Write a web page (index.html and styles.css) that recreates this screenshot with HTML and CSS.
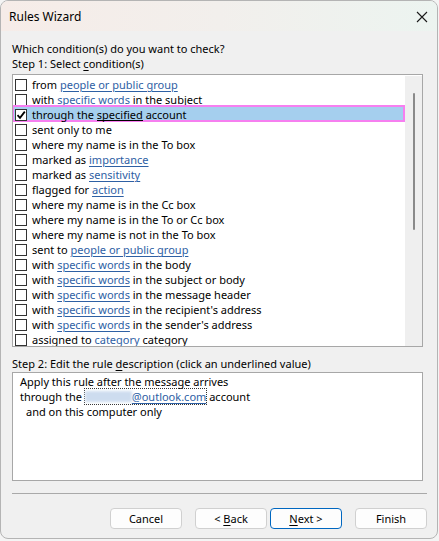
FILE: index.html
```html
<!DOCTYPE html>
<html>
<head>
<meta charset="utf-8">
<link rel="stylesheet" href="styles.css">
</head>
<body>
<div class="window">
  <div class="titlebar">
    <span class="title">Rules Wizard</span>
    <span class="close"><svg width="12" height="12" viewBox="0 0 12 12"><path d="M1 1 L11 11 M11 1 L1 11" stroke="#1a1a1a" stroke-width="1.1" fill="none"/></svg></span>
  </div>
  <div class="content">
    <div class="label">Which condition(s) do you want to check?</div>
    <div class="label">Step 1: Select <u>c</u>ondition(s)</div>
    <div class="listbox">
      <ul class="items">
        <li class="row"><span class="cb"></span><span>from <a>people or public group</a></span></li>
        <li class="row"><span class="cb"></span><span>with <a>specific words</a> in the subject</span></li>
        <li class="row selected"><span class="cb checked"><svg width="10" height="10" viewBox="0 0 10 10"><path d="M1.5 5.2 L4 7.8 L8.8 1.6" stroke="#000" stroke-width="1.8" fill="none"/></svg></span><span class="seltext">through the <span class="sel">specified</span> account</span></li>
        <li class="row"><span class="cb"></span><span>sent only to me</span></li>
        <li class="row"><span class="cb"></span><span>where my name is in the To box</span></li>
        <li class="row"><span class="cb"></span><span>marked as <a>importance</a></span></li>
        <li class="row"><span class="cb"></span><span>marked as <a>sensitivity</a></span></li>
        <li class="row"><span class="cb"></span><span>flagged for <a>action</a></span></li>
        <li class="row"><span class="cb"></span><span>where my name is in the Cc box</span></li>
        <li class="row"><span class="cb"></span><span>where my name is in the To or Cc box</span></li>
        <li class="row"><span class="cb"></span><span>where my name is not in the To box</span></li>
        <li class="row"><span class="cb"></span><span>sent to <a>people or public group</a></span></li>
        <li class="row"><span class="cb"></span><span>with <a>specific words</a> in the body</span></li>
        <li class="row"><span class="cb"></span><span>with <a>specific words</a> in the subject or body</span></li>
        <li class="row"><span class="cb"></span><span>with <a>specific words</a> in the message header</span></li>
        <li class="row"><span class="cb"></span><span>with <a>specific words</a> in the recipient's address</span></li>
        <li class="row"><span class="cb"></span><span>with <a>specific words</a> in the sender's address</span></li>
        <li class="row"><span class="cb"></span><span>assigned to <a>category</a> category</span></li>
      </ul>
      <div class="scrollbar"><div class="thumb"></div></div>
    </div>
    <div class="label step2">Step 2: Edit the rule <u>d</u>escription (click an underlined value)</div>
    <div class="desc">
      <div class="dline">Apply this rule after the message arrives</div>
      <div class="dline">through the <span class="focus"><span class="blur"></span><a>@outlook.com</a></span> account</div>
      <div class="dline indent">and on this computer only</div>
    </div>
    <div class="sep"></div>
    <div class="buttons">
      <button class="btn cancel">Cancel</button>
      <button class="btn back">&lt; <u>B</u>ack</button>
      <button class="btn next default"><u>N</u>ext &gt;</button>
      <button class="btn">Finish</button>
    </div>
  </div>
</div>
</body>
</html>
```
FILE: styles.css
```css
* { box-sizing: border-box; }
html, body { margin: 0; padding: 0; }
body {
  background: #f4f4f4;
  font-family: "Noto Sans", "DejaVu Sans", sans-serif;
  font-size: 11px;
  color: #000;
}
.window {
  width: 438px;
  height: 539px;
  border: 1px solid #b4b4b4;
  border-radius: 8px;
  background: #f0f0f0;
  overflow: hidden;
  display: flex;
  flex-direction: column;
}
.titlebar {
  height: 30px;
  flex: none;
  display: flex;
  align-items: center;
  justify-content: space-between;
  padding: 0 9px 0 8px;
  background: linear-gradient(90deg, #f6ece8 0%, #f2efec 50%, #ecf4f0 100%);
}
.title { font-size: 12px; }
.close { display: flex; width: 12px; height: 12px; margin-top: 1px; }
.content {
  padding: 10px 10px 0 11px;
  display: flex;
  flex-direction: column;
}
.label { line-height: 15px; height: 15px; white-space: nowrap; }
.label u { text-decoration-thickness: 1px; text-underline-offset: 2px; }
.listbox {
  margin-top: 3px;
  width: 411px;
  height: 273px;
  border: 1px solid #a7a7a7;
  background: #fff;
  display: flex;
  overflow: hidden;
}
.items {
  list-style: none;
  margin: 0;
  padding: 2px 0 0 0;
  flex: 1;
}
.row {
  height: 15px;
  line-height: 15px;
  display: flex;
  align-items: center;
  padding-left: 2px;
  position: relative;
  white-space: nowrap;
}
.row.selected { background: #a5cfee; }
.row.selected::before {
  content: "";
  position: absolute;
  left: -1px; right: 0; top: -2px; bottom: 0;
  border: 2px solid #f67ff0;
  pointer-events: none;
}
.seltext { position: relative; z-index: 1; }
.sel {
  display: inline-block;
  line-height: 11px;
  border-bottom: 1px solid #000;
}
.cb {
  width: 12px;
  height: 12px;
  border: 1px solid #333;
  background: #fff;
  margin-right: 5px;
  flex: none;
  display: flex;
  align-items: center;
  justify-content: center;
  position: relative;
}
a {
  color: #2e60a4;
  text-decoration: underline;
  text-decoration-thickness: 1px;
  text-underline-offset: 2px;
}
.scrollbar {
  width: 17px;
  margin: 1px 0 0 0;
  background: #efefef;
  flex: none;
  display: flex;
  justify-content: center;
  padding-top: 17px;
}
.thumb {
  width: 2px;
  height: 137px;
  background: #8a8a8a;
  border-radius: 1px;
}
.step2 { margin-top: 9px; }
.desc {
  margin-top: 1px;
  width: 411px;
  height: 109px;
  border: 1px solid #a7a7a7;
  background: #fff;
  padding: 1px 0 0 7px;
}
.dline { line-height: 15px; height: 15px; white-space: nowrap; }
.dline.indent { padding-left: 6px; }
.focus {
  display: inline-flex;
  align-items: center;
  height: 15px;
  outline: 1px dotted #333;
  outline-offset: 0;
  vertical-align: top;
}
.blur {
  display: inline-block;
  width: 47px;
  height: 11px;
  background: #cddcef;
  filter: blur(1.5px);
}
.sep {
  margin-top: 12px;
  height: 1px;
  width: 415px;
  background: #a9a9a9;
}
.buttons {
  margin-top: 14px;
  display: flex;
  justify-content: flex-end;
  width: 415px;
}
.btn {
  width: 72px;
  height: 21px;
  border: 1px solid #d0d0d0;
  border-radius: 4px;
  background: #fdfdfd;
  font-family: inherit;
  font-size: 11px;
  color: #000;
  padding: 0;
}
.btn u { text-underline-offset: 2px; }
.btn.default { border-color: #0067c0; }
.cancel { margin-right: 13px; }
.back { margin-right: 3px; }
.next { margin-right: 13px; }
```
